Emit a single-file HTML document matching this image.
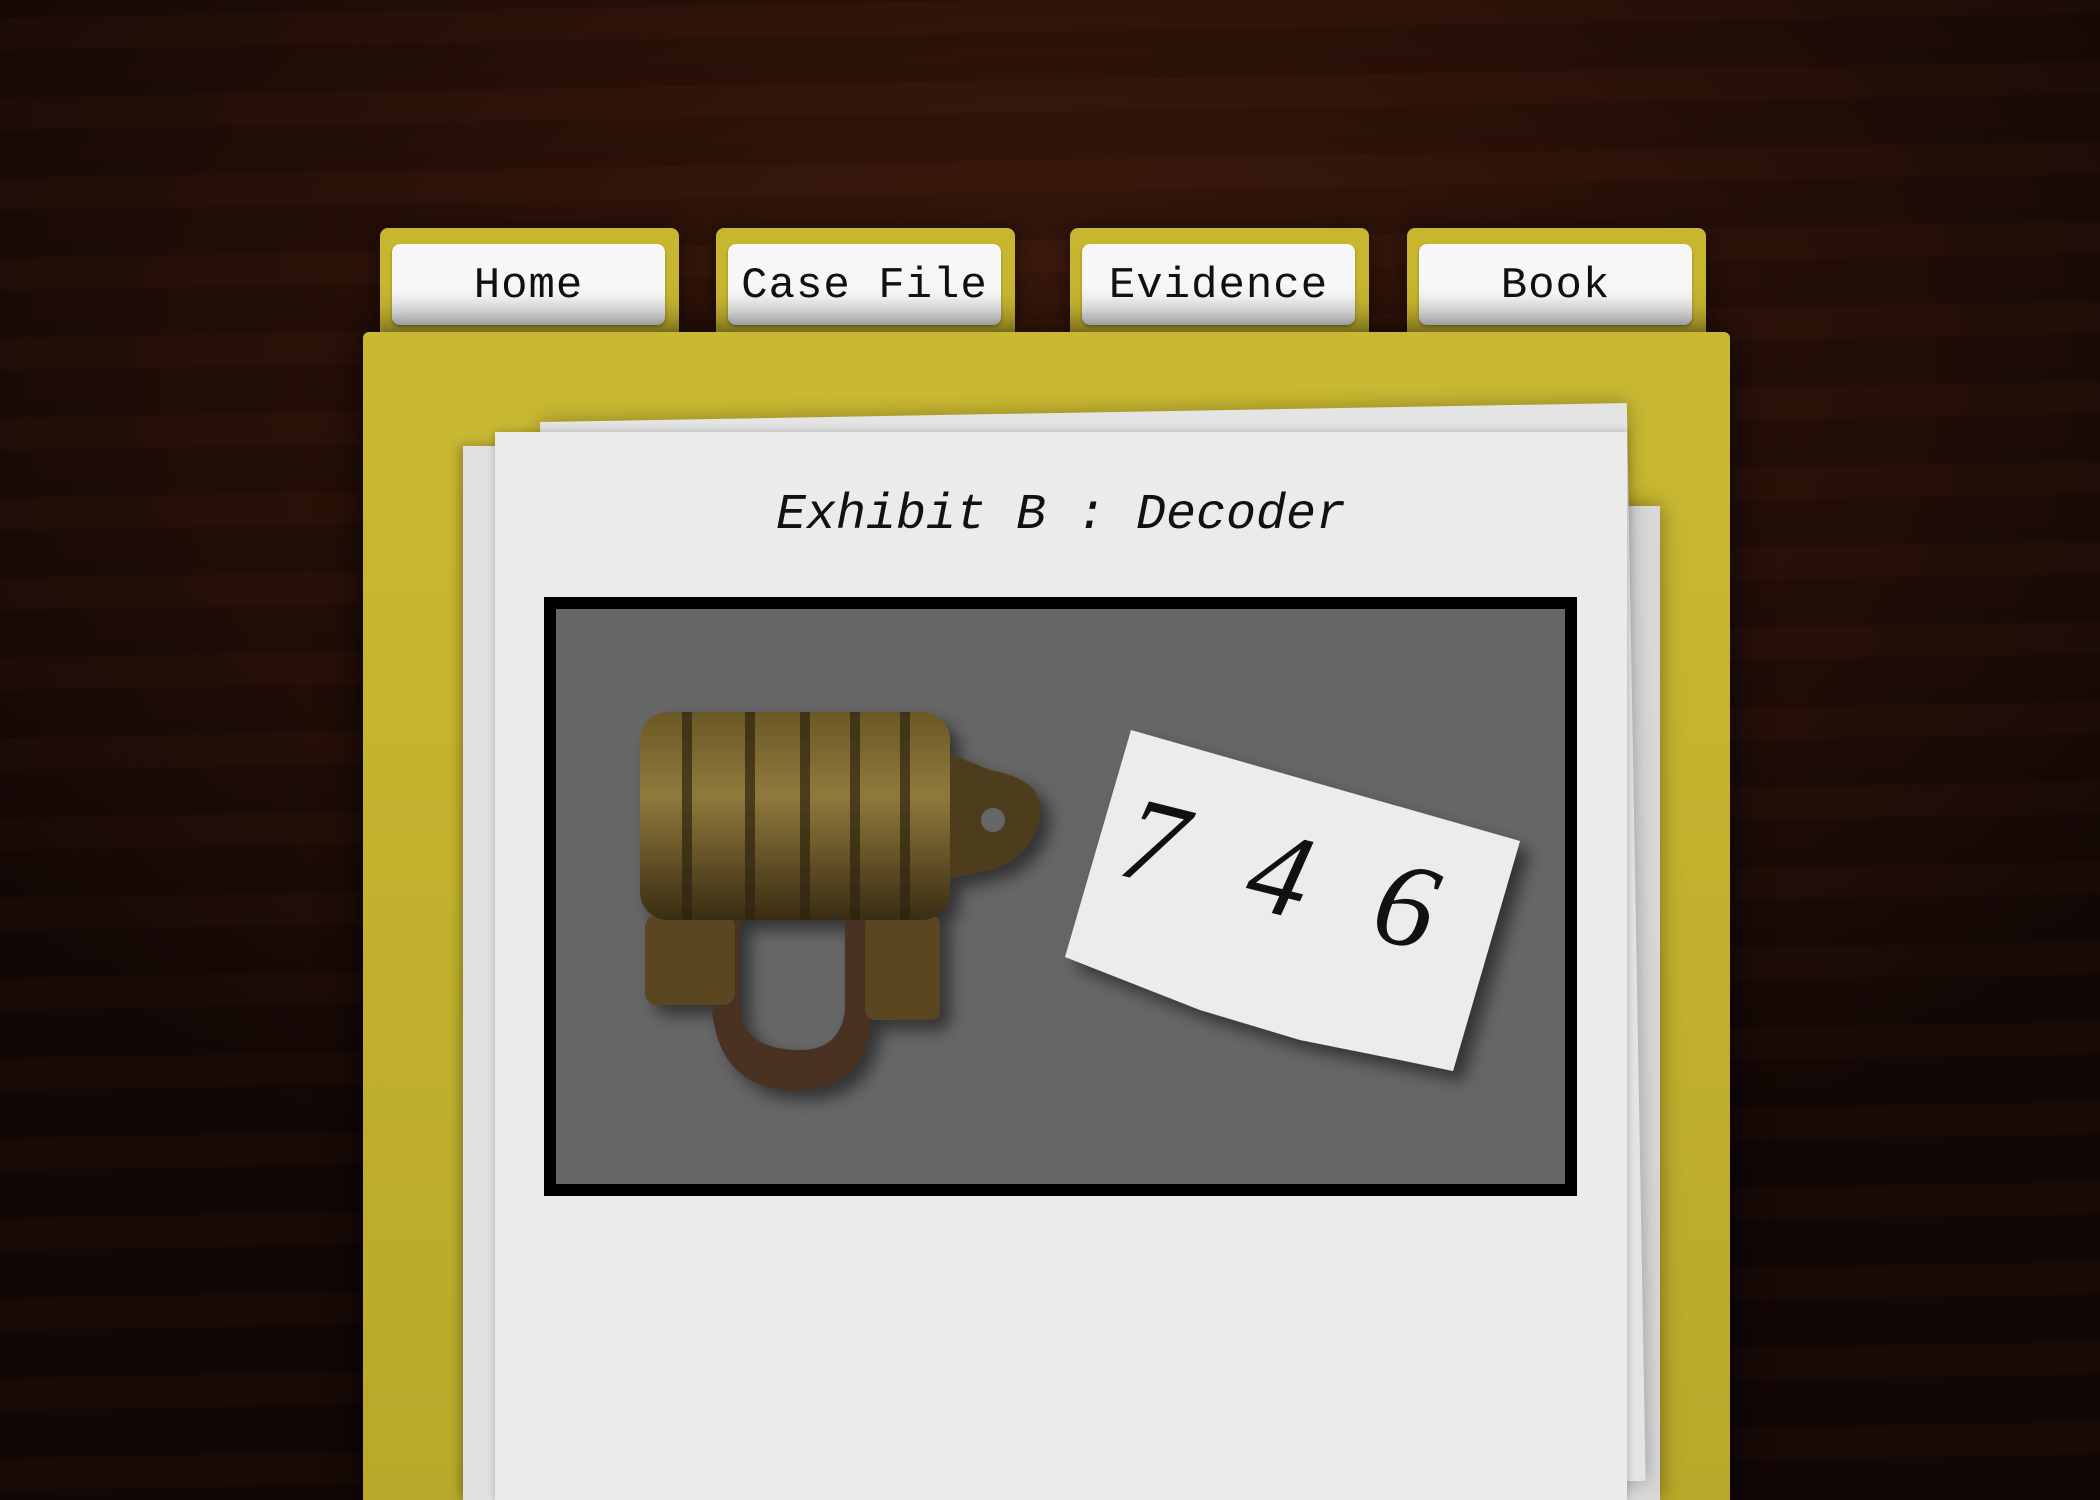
<!DOCTYPE html>
<html><head><meta charset="utf-8"><style>
html,body{margin:0;padding:0;width:2100px;height:1500px;overflow:hidden}
body{position:relative;background:
radial-gradient(ellipse 1300px 900px at 50% 25%, #3e1a0c 0%, #2a1108 50%, #140805 100%);}
.grain{position:absolute;inset:0;background:repeating-linear-gradient(179deg, rgba(0,0,0,0.10) 0 18px, rgba(90,40,20,0.06) 18px 50px, rgba(0,0,0,0.08) 50px 80px);}
.tab{position:absolute;top:228px;width:299px;height:110px;background:#c8b630;border-radius:8px 8px 0 0;box-shadow:0 0 20px rgba(0,0,0,.5)}
.btn{position:absolute;left:12px;top:16px;width:273px;height:81px;border-radius:8px;background:linear-gradient(#f7f7f7 60%,#dcdcdc);box-shadow:0 2px 3px rgba(0,0,0,.3);font:44px "Liberation Mono",monospace;color:#111;text-align:center;line-height:84px;letter-spacing:1px}
.folder{position:absolute;left:363px;top:332px;width:1367px;height:1168px;background:linear-gradient(#c9b932,#b9a92a);border-radius:6px 6px 0 0;box-shadow:0 0 40px rgba(0,0,0,.8)}
.sheet{position:absolute;background:#e9e9e9}
</style></head><body>
<div class="grain"></div>
<div class="tab" style="left:380px"><div class="btn">Home</div></div>
<div class="tab" style="left:716px"><div class="btn">Case File</div></div>
<div class="tab" style="left:1070px"><div class="btn">Evidence</div></div>
<div class="tab" style="left:1407px"><div class="btn">Book</div></div>
<div class="folder"></div>
<div class="sheet" style="left:1560px;top:506px;width:100px;height:994px;background:#d8d8d8;box-shadow:0 0 20px rgba(0,0,0,.4)"></div>
<div class="sheet" style="left:540px;top:422px;width:1087px;height:1078px;background:#e4e4e4;transform:rotate(-1deg);transform-origin:0 0;box-shadow:0 0 20px rgba(0,0,0,.3)"></div>
<div class="sheet" style="left:463px;top:446px;width:80px;height:1054px;background:#e2e2e2;box-shadow:-3px 0 10px rgba(0,0,0,.3)"></div>
<div class="sheet" style="left:495px;top:432px;width:1132px;height:1068px;background:#ebebeb;box-shadow:0 0 8px rgba(0,0,0,.25)"></div>
<div style="position:absolute;left:495px;top:487px;width:1132px;text-align:center;font:italic 50px 'Liberation Mono',monospace;color:#111">Exhibit B : Decoder</div>
<div style="position:absolute;left:544px;top:597px;width:1009px;height:575px;border:12px solid #000;background:#666"></div>
<svg style="position:absolute;left:0;top:0" width="2100" height="1500">
<defs><linearGradient id="br" x1="0" y1="0" x2="0" y2="1"><stop offset="0" stop-color="#6b5826"/><stop offset=".4" stop-color="#8f7a3c"/><stop offset="1" stop-color="#3a2c12"/></linearGradient>
<filter id="sh"><feDropShadow dx="10" dy="10" stdDeviation="8" flood-opacity=".5"/></filter></defs>
<g filter="url(#sh)">
<path d="M712 920 L712 1010 Q720 1090 795 1090 Q860 1090 870 1030 L870 920 L845 920 L845 1010 Q840 1050 800 1050 Q745 1050 740 1010 L740 920Z" fill="#4a3220"/>
<rect x="645" y="915" width="90" height="90" rx="12" fill="#5a4620"/>
<rect x="865" y="915" width="75" height="105" rx="10" fill="#5a4620"/>
<path d="M940 750 L990 770 Q1045 780 1040 815 Q1035 855 990 870 L940 880Z" fill="#4e3c1a"/>
<circle cx="993" cy="820" r="12" fill="#666"/>
<rect x="640" y="712" width="310" height="208" rx="28" fill="url(#br)"/>
<g fill="#2e2410" opacity=".7"><rect x="682" y="712" width="10" height="208"/><rect x="745" y="712" width="10" height="208"/><rect x="800" y="712" width="10" height="208"/><rect x="850" y="712" width="10" height="208"/><rect x="900" y="712" width="10" height="208"/></g>
</g>
<g filter="url(#sh)"><polygon points="1131,730 1520,841 1453,1071 1400,1060 1300,1040 1200,1010 1065,957" fill="#ececec"/></g>
<text x="1280" y="915" transform="rotate(14 1280 915)" font-family="Liberation Serif,serif" font-style="italic" font-size="120" fill="#111" text-anchor="middle" letter-spacing="20">7 4 6</text>
</svg>
</body></html>
